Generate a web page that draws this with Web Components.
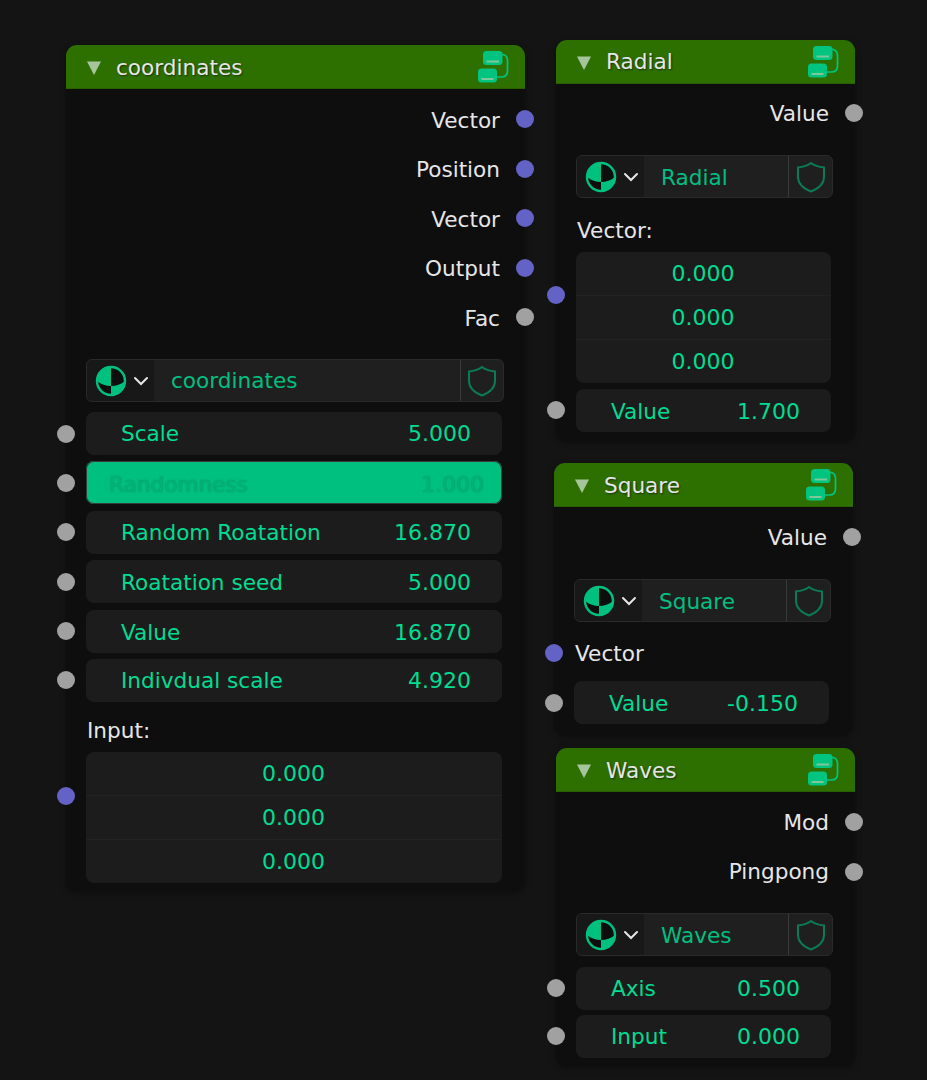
<!DOCTYPE html>
<html>
<head>
<meta charset="utf-8">
<title>Nodes</title>
<style>
  html, body { margin: 0; height: 100%; background: #141414; overflow: hidden; }
  body { position: relative; width: 927px; height: 1080px; font-family: "DejaVu Sans", sans-serif; }
  .first { margin-top: 5.5px; }
  .first-tight { margin-top: 4.5px; }
  .after-outputs { margin-top: 17px; }
  .after-outputs-tight { margin-top: 16.5px; }
  .after-select { margin-top: 10px; }
  .after-select-wide { margin-top: 10.5px; }
  .next { margin-top: 6.4px; }
  .next-tight { margin-top: 5px; }
  .label-gap { margin-top: 17px; }
  .label-gap-wide { margin-top: 20px; }
  .after-input { margin-top: 14px; }
  /* text sits a pixel or two lower in some rows of the reference */
  .nudge { padding-top: 2px; }
  .nudge-more { padding-top: 4px; }
</style>
</head>
<body>

<node-frame title="coordinates" style="left:66px;top:45px;width:459px;height:846px;--body-right:21px;--guard-w:43px;--title-shift:2px;--out-shift:2px">
  <socket-output class="first" color="vector">Vector</socket-output>
  <socket-output color="vector">Position</socket-output>
  <socket-output color="vector">Vector</socket-output>
  <socket-output color="vector">Output</socket-output>
  <socket-output>Fac</socket-output>
  <data-select class="after-outputs">coordinates</data-select>
  <num-field class="after-select" label="Scale" value="5.000"></num-field>
  <num-field class="next nudge-more" label="Randomness" value="1.000" active></num-field>
  <num-field class="next" label="Random Roatation" value="16.870"></num-field>
  <num-field class="next nudge" label="Roatation seed" value="5.000"></num-field>
  <num-field class="next nudge" label="Value" value="16.870"></num-field>
  <num-field class="next" label="Indivdual scale" value="4.920"></num-field>
  <vector-field class="label-gap" label="Input:"></vector-field>
</node-frame>

<node-frame title="Radial" style="left:556px;top:40px;width:299px;height:401px;--name-shift:2px">
  <socket-output class="first-tight">Value</socket-output>
  <data-select class="after-outputs">Radial</data-select>
  <vector-field class="label-gap-wide" label="Vector:"></vector-field>
  <num-field class="next nudge" label="Value" value="1.700"></num-field>
</node-frame>

<node-frame title="Square" style="left:554px;top:463px;width:299px;height:272px;--name-shift:2px;--title-shift:2px">
  <socket-output class="first">Value</socket-output>
  <data-select class="after-outputs">Square</data-select>
  <socket-input class="label-gap" color="vector">Vector</socket-input>
  <num-field class="after-input nudge" label="Value" value="-0.150"></num-field>
</node-frame>

<node-frame title="Waves" style="left:556px;top:748px;width:299px;height:318px;--name-shift:2px;--title-shift:2px">
  <socket-output class="first">Mod</socket-output>
  <socket-output>Pingpong</socket-output>
  <data-select class="after-outputs-tight">Waves</data-select>
  <num-field class="after-select-wide" label="Axis" value="0.500"></num-field>
  <num-field class="next-tight" label="Input" value="0.000"></num-field>
</node-frame>

<script>
const SOCKET_COLORS = { vector: "#6363c7", value: "#a1a1a1" };

class NodeFrame extends HTMLElement {
  constructor() {
    super();
    this.attachShadow({ mode: "open" }).innerHTML = `
      <style>
        :host {
          position: absolute;
          display: flex;
          flex-direction: column;
          background: #0e0e0e;
          border-radius: 11px;
          box-shadow: 0 2px 6px rgba(0,0,0,0.35);
        }
        .head {
          flex: none;
          height: 43px;
          display: flex;
          align-items: center;
          background: #2e7000;
          border-bottom: 1px solid #286000;
          border-radius: 11px 11px 0 0;
          color: #e6e6e6;
          font-size: 21.6px;
          text-shadow: 1px 1px 2px rgba(0,0,0,0.55);
        }
        .tri { margin: 2px 15px 0 21px; flex: none; }
        .title { flex: 1; padding-top: var(--title-shift, 0); }
        .link { margin-right: 15px; flex: none; }
        .body {
          flex: 1;
          display: flex;
          flex-direction: column;
          padding: 0 var(--body-right, 22px) 0 20px;
        }
      </style>
      <div class="head">
        <svg class="tri" width="14" height="14" viewBox="0 0 14 14"><path d="M0 .5h14L7 14z" fill="#a6c59c"/></svg>
        <span class="title"></span>
        <svg class="link" width="32" height="32" viewBox="0 0 32 32" fill="none">
          <rect x="5" y="0" width="19.500" height="14" rx="3.500" fill="#00c47f"/>
          <rect x="0" y="17.500" width="19" height="14" rx="3.500" fill="#00c47f"/>
          <path d="M8.500 10.500h12.500M3.500 28h12" stroke="#7fc79a" stroke-width="2"/>
          <path d="M24 3.500h1.500c2.500 1 4 3 4 6v10c0 4.500-2.500 6.500-6 6.500h-4.500" stroke="#00c47f" stroke-width="1.700"/>
        </svg>
      </div>
      <div class="body"><slot></slot></div>`;
    this.shadowRoot.querySelector(".title").textContent = this.getAttribute("title");
    this.removeAttribute("title");
  }
}

class SocketOutput extends HTMLElement {
  constructor() {
    super();
    const col = SOCKET_COLORS[this.getAttribute("color")] || SOCKET_COLORS.value;
    this.attachShadow({ mode: "open" }).innerHTML = `
      <style>
        :host {
          position: relative;
          display: flex;
          box-sizing: border-box;
          height: 49.5px;
          align-items: center;
          justify-content: flex-end;
          padding-right: 4px;
          padding-top: var(--out-shift, 0);
          color: #e6e6e6;
          font-size: 21.6px;
        }
        i {
          position: absolute;
          right: -30px;
          top: 50%;
          width: 18px;
          height: 18px;
          margin-top: -9px;
          border-radius: 50%;
          background: ${col};
        }
      </style>
      <slot></slot><i></i>`;
  }
}

class SocketInput extends HTMLElement {
  constructor() {
    super();
    const col = SOCKET_COLORS[this.getAttribute("color")] || SOCKET_COLORS.value;
    this.attachShadow({ mode: "open" }).innerHTML = `
      <style>
        :host {
          position: relative;
          display: flex;
          height: 28px;
          align-items: center;
          padding-left: 1px;
          color: #e6e6e6;
          font-size: 21.6px;
        }
        i {
          position: absolute;
          left: -29px;
          top: 50%;
          width: 18px;
          height: 18px;
          margin-top: -9px;
          border-radius: 50%;
          background: ${col};
        }
      </style>
      <slot></slot><i></i>`;
  }
}

class DataSelect extends HTMLElement {
  constructor() {
    super();
    this.attachShadow({ mode: "open" }).innerHTML = `
      <style>
        :host {
          display: flex;
          height: 43px;
          box-sizing: border-box;
          border: 1px solid #2a2a2a;
          border-radius: 6px;
          background: #1f1f1f;
          color: #00bf80;
          font-size: 21.6px;
          overflow: hidden;
        }
        .pick {
          flex: none;
          width: 67px;
          display: flex;
          align-items: center;
          background: #181818;
        }
        .ball { margin-left: 8px; flex: none; }
        .chev { margin-left: 6px; flex: none; }
        .name {
          flex: 1;
          display: flex;
          align-items: center;
          padding-left: 17px;
          padding-top: var(--name-shift, 0);
        }
        .guard {
          flex: none;
          box-sizing: border-box;
          width: var(--guard-w, 44px);
          display: flex;
          align-items: center;
          justify-content: center;
          border-left: 1px solid #3a3a3a;
        }
      </style>
      <div class="pick">
        <svg class="ball" width="32" height="32" viewBox="0 0 32 32">
          <circle cx="16" cy="16" r="14" fill="#0e0e0e" stroke="#00c080" stroke-width="2.400"/>
          <path d="M16 2A14 14 0 0 0 2 16C6 19.500 11 21 16 21z" fill="#00c080"/>
          <path d="M16 21C21 21 26 19.500 30 16A14 14 0 0 1 16 30z" fill="#00c080"/>
        </svg>
        <svg class="chev" width="16" height="10" viewBox="0 0 16 10"><path d="M2 2l6 6 6-6" fill="none" stroke="#e6e6e6" stroke-width="2" stroke-linecap="round"/></svg>
      </div>
      <div class="name"><slot></slot></div>
      <div class="guard">
        <svg width="30" height="32" viewBox="0 0 30 32"><path d="M15 2c3 2.500 8 4 13 4.500v9.500c0 6.500-5.500 11.500-13 14.500C7.500 27.500 2 22.500 2 16V6.500C7 6 12 4.500 15 2z" fill="none" stroke="#0b7a55" stroke-width="2"/></svg>
      </div>`;
  }
}

class NumField extends HTMLElement {
  constructor() {
    super();
    this.attachShadow({ mode: "open" }).innerHTML = `
      <style>
        :host {
          position: relative;
          display: flex;
          height: 43px;
          margin-right: 2px;
          box-sizing: border-box;
          align-items: center;
          justify-content: space-between;
          padding-left: 35px;
          padding-right: 31px;
          border-radius: 8px;
          background: #1c1c1c;
          color: #00dc92;
          font-size: 21.6px;
        }
        :host([active]) {
          padding-left: 23px;
          padding-right: 18px;
          background: #00c080;
          box-shadow: inset 0 0 0 1px #3a3a3a;
          color: #00b377;
          text-shadow: 0 0 1.5px #0a8a5f;
        }
        .val { font-size: 22px; }
        i {
          position: absolute;
          left: -29px;
          top: 50%;
          width: 18px;
          height: 18px;
          margin-top: -9px;
          border-radius: 50%;
          background: ${SOCKET_COLORS.value};
        }
      </style>
      <span class="lab"></span><span class="val"></span><i></i>`;
    this.shadowRoot.querySelector(".lab").textContent = this.getAttribute("label");
    this.shadowRoot.querySelector(".val").textContent = this.getAttribute("value");
  }
}

class VectorField extends HTMLElement {
  constructor() {
    super();
    this.attachShadow({ mode: "open" }).innerHTML = `
      <style>
        :host {
          position: relative;
          display: block;
          margin-right: 2px;
          font-size: 21.6px;
        }
        .lab { height: 24px; padding-left: 1px; display: flex; align-items: center; color: #e6e6e6; }
        .box {
          margin-top: 9.5px;
          height: 131px;
          display: flex;
          flex-direction: column;
          border-radius: 8px;
          background: #1c1c1c;
          color: #00dc92;
          font-size: 22px;
        }
        .box div { flex: 1; display: flex; align-items: center; justify-content: center; padding-right: 1px; }
        .box div + div { border-top: 1px solid #222; }
        i {
          position: absolute;
          left: -29px;
          top: 68px;
          width: 18px;
          height: 18px;
          border-radius: 50%;
          background: ${SOCKET_COLORS.vector};
        }
      </style>
      <div class="lab"></div>
      <div class="box"><div>0.000</div><div>0.000</div><div>0.000</div></div>
      <i></i>`;
    this.shadowRoot.querySelector(".lab").textContent = this.getAttribute("label");
  }
}

customElements.define("node-frame", NodeFrame);
customElements.define("socket-output", SocketOutput);
customElements.define("socket-input", SocketInput);
customElements.define("data-select", DataSelect);
customElements.define("num-field", NumField);
customElements.define("vector-field", VectorField);
</script>
</body>
</html>
